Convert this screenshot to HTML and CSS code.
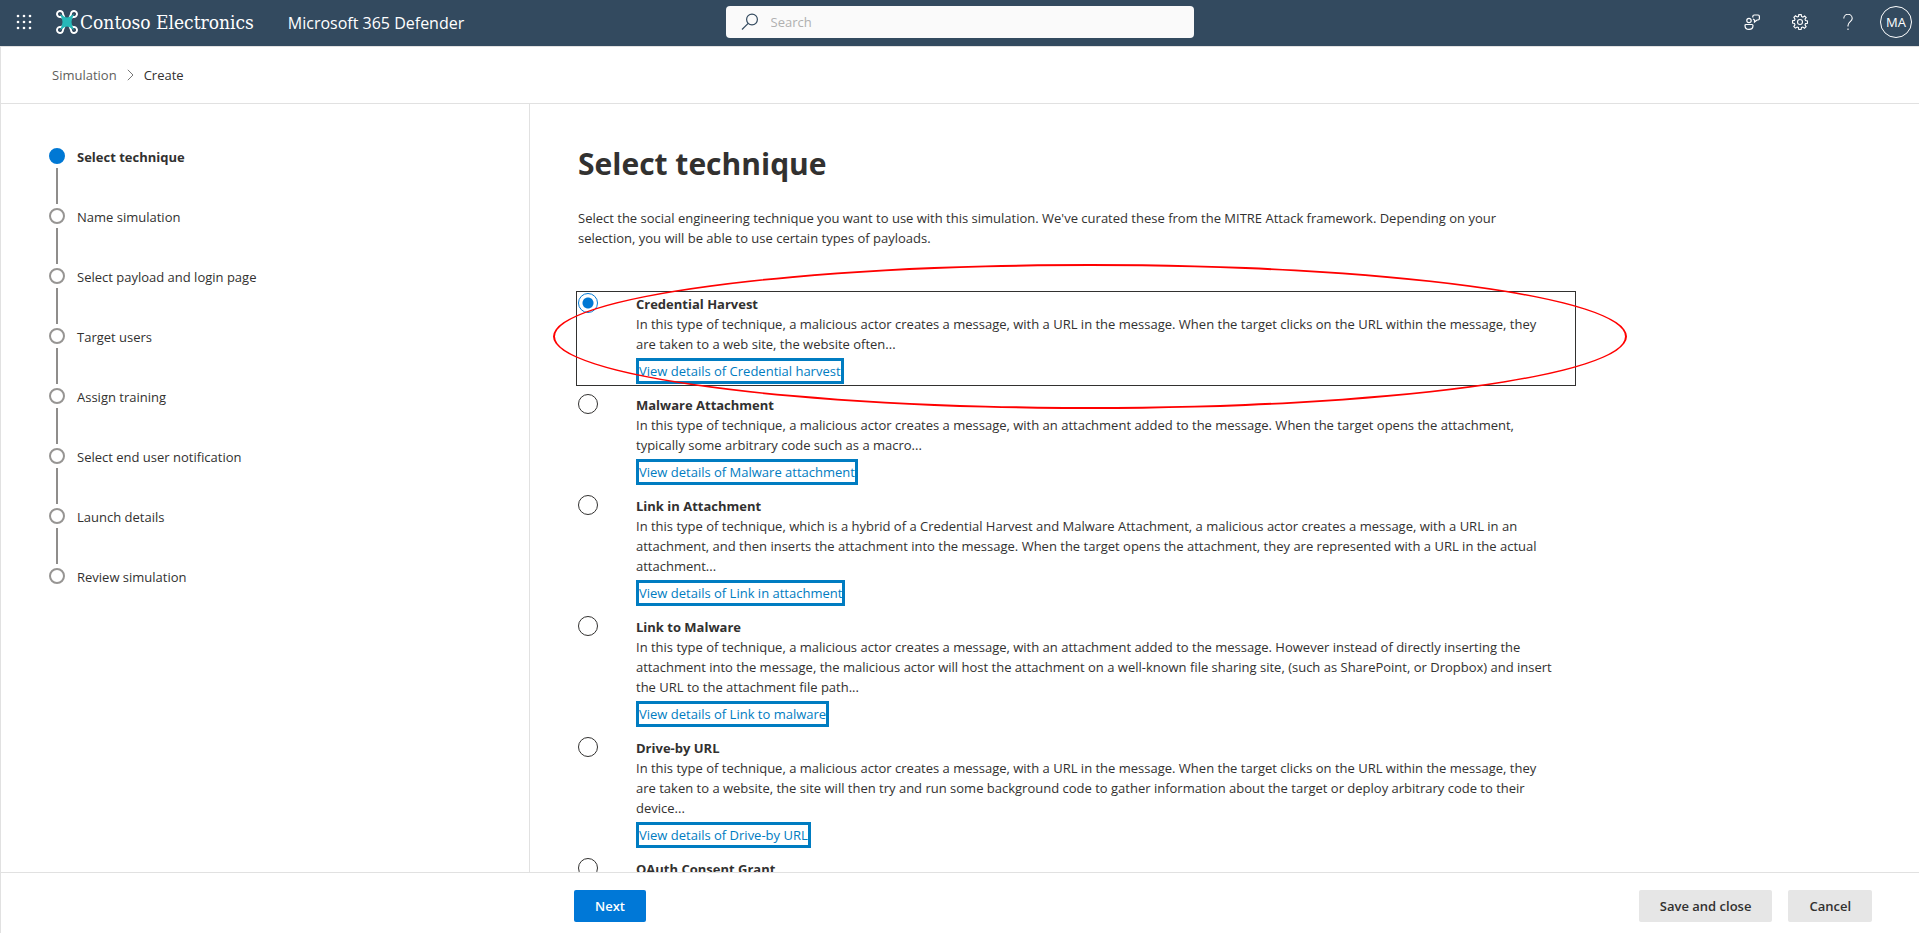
FILE: index.html
```html
<!DOCTYPE html>
<html lang="en">
<head>
    <meta charset="UTF-8">
    <title>Simulation - Microsoft 365 Defender</title>
    <link rel="stylesheet" href="styles.css">
</head>
<body>
    <header class="topbar">
        <div class="topbar-left">
            <button class="icon-btn waffle" aria-label="App launcher">
                <svg width="16" height="16" viewBox="0 0 16 16" fill="#fff">
                    <circle cx="2" cy="2" r="1.3"/><circle cx="8" cy="2" r="1.3"/><circle cx="14" cy="2" r="1.3"/>
                    <circle cx="2" cy="8" r="1.3"/><circle cx="8" cy="8" r="1.3"/><circle cx="14" cy="8" r="1.3"/>
                    <circle cx="2" cy="14" r="1.3"/><circle cx="8" cy="14" r="1.3"/><circle cx="14" cy="14" r="1.3"/>
                </svg>
            </button>
            <a class="brand" href="#">
                <svg width="22" height="24" viewBox="0 0 22 24" fill="none">
                    <g stroke="#fff" stroke-width="1.9">
                        <path d="M6.800 7.800L4.600 6.900A3 3 0 1 1 7 4L8.600 7.800"/>
                        <path d="M15.200 7.800L17.400 6.900A3 3 0 1 0 15 4L13.400 7.800"/>
                        <path d="M6.800 16.200L4.600 17.100A3 3 0 1 0 7 20L8.600 16.200"/>
                        <path d="M15.200 16.200L17.400 17.100A3 3 0 1 1 15 20L13.400 16.200"/>
                    </g>
                    <path d="M4 4L8.500 6.800Q11 8 13.500 6.800L18 4L16 9Q15 12 16 15L18 20L13.500 17.200Q11 16 8.500 17.200L4 20L6 15Q7 12 6 9Z" fill="#26b8b8"/>
                </svg>
                <span>Contoso Electronics</span>
            </a>
            <a class="product" href="#">Microsoft 365 Defender</a>
        </div>
        <label class="search">
            <svg width="18" height="18" viewBox="0 0 18 18" fill="none" stroke="#334a5f" stroke-width="1.2">
                <circle cx="11" cy="6.500" r="5.400"/><path d="M7.200 10.300L1 16.500"/>
            </svg>
            <input type="text" placeholder="Search" aria-label="Search">
        </label>
        <div class="topbar-right">
            <button class="icon-btn" aria-label="Community">
                <svg width="16" height="16" viewBox="0 0 16 16" fill="none" stroke="#fff" stroke-width="1.200">
                    <circle cx="5" cy="6.500" r="2.200"/>
                    <path d="M2 10.500H8A1 1 0 0 1 9 11.500C9 14 7.500 15.400 5 15.400S1 14 1 11.500A1 1 0 0 1 2 10.500Z"/>
                    <path d="M8.800 3.500V2.500A1.500 1.500 0 0 1 10.300 1H14A1.500 1.500 0 0 1 15.400 2.500V4.500A1.500 1.500 0 0 1 14 6H13L10.500 8V6L9 5"/>
                </svg>
            </button>
            <button class="icon-btn" aria-label="Settings">
                <svg width="16" height="16" viewBox="0 0 16 16" fill="none" stroke="#fff" stroke-width="1.100">
                    <path d="M6.800 .6H9.200L9.600 2.600L10.900 3.100L12.600 2L14.200 3.600L13 5.200L13.500 6.500L15.500 6.900V9.200L13.500 9.600L13 10.900L14.100 12.600L12.500 14.200L10.800 13L9.500 13.500L9.100 15.500H6.800L6.400 13.500L5.100 13L3.400 14.100L1.800 12.500L3 10.800L2.500 9.500L.5 9.100V6.800L2.500 6.400L3 5.100L1.900 3.400L3.500 1.800L5.200 3L6.500 2.500Z"/>
                    <circle cx="8" cy="8" r="2.500"/>
                </svg>
            </button>
            <button class="icon-btn" aria-label="Help">
                <svg width="16" height="16" viewBox="0 0 16 16" fill="none" stroke="#fff" stroke-width="1.100">
                    <path d="M3.800 4.500A4.200 4.200 0 0 1 12.200 4.500C12.200 7.500 8 8 8 11.500V12.500"/><path d="M8 14.500V16"/>
                </svg>
            </button>
            <button class="avatar">MA</button>
        </div>
    </header>

    <nav class="breadcrumb" aria-label="Breadcrumb">
        <a href="#">Simulation</a>
        <svg width="7" height="12" viewBox="0 0 7 12" fill="none" stroke="#777"><path d="M.8 .8L6 6L.8 11.200"/></svg>
        <span>Create</span>
    </nav>

    <div class="wizard">
        <aside class="steps">
            <ol>
                <li class="current">Select technique</li>
                <li>Name simulation</li>
                <li>Select payload and login page</li>
                <li>Target users</li>
                <li>Assign training</li>
                <li>Select end user notification</li>
                <li>Launch details</li>
                <li>Review simulation</li>
            </ol>
        </aside>

        <main class="content">
            <h1>Select technique</h1>
            <p class="intro">Select the social engineering technique you want to use with this simulation. We've curated these from the MITRE Attack framework. Depending on your selection, you will be able to use certain types of payloads.</p>

            <div class="option selected">
                <input type="radio" name="technique" id="t-credential" checked>
                <div class="option-text">
                    <label for="t-credential">Credential Harvest</label>
                    <p>In this type of technique, a malicious actor creates a message, with a URL in the message. When the target clicks on the URL within the message, they are taken to a web site, the website often...</p>
                    <a href="#">View details of Credential harvest</a>
                </div>
                <div class="highlight"></div>
            </div>
            <div class="option">
                <input type="radio" name="technique" id="t-malware">
                <div class="option-text">
                    <label for="t-malware">Malware Attachment</label>
                    <p>In this type of technique, a malicious actor creates a message, with an attachment added to the message. When the target opens the attachment, typically some arbitrary code such as a macro...</p>
                    <a href="#">View details of Malware attachment</a>
                </div>
            </div>
            <div class="option">
                <input type="radio" name="technique" id="t-link-in">
                <div class="option-text">
                    <label for="t-link-in">Link in Attachment</label>
                    <p>In this type of technique, which is a hybrid of a Credential Harvest and Malware Attachment, a malicious actor creates a message, with a URL in an attachment, and then inserts the attachment into the message. When the target opens the attachment, they are represented with a URL in the actual attachment...</p>
                    <a href="#">View details of Link in attachment</a>
                </div>
            </div>
            <div class="option">
                <input type="radio" name="technique" id="t-link-to">
                <div class="option-text">
                    <label for="t-link-to">Link to Malware</label>
                    <p>In this type of technique, a malicious actor creates a message, with an attachment added to the message. However instead of directly inserting the attachment into the message, the malicious actor will host the attachment on a well-known file sharing site, (such as SharePoint, or Dropbox) and insert the URL to the attachment file path...</p>
                    <a href="#">View details of Link to malware</a>
                </div>
            </div>
            <div class="option">
                <input type="radio" name="technique" id="t-driveby">
                <div class="option-text">
                    <label for="t-driveby">Drive-by URL</label>
                    <p>In this type of technique, a malicious actor creates a message, with a URL in the message. When the target clicks on the URL within the message, they are taken to a website, the site will then try and run some background code to gather information about the target or deploy arbitrary code to their device...</p>
                    <a href="#">View details of Drive-by URL</a>
                </div>
            </div>
            <div class="option">
                <input type="radio" name="technique" id="t-oauth">
                <div class="option-text">
                    <label for="t-oauth">OAuth Consent Grant</label>
                </div>
            </div>
        </main>
    </div>

    <footer class="actions">
        <button class="btn primary">Next</button>
        <div class="actions-right">
            <button class="btn">Save and close</button>
            <button class="btn">Cancel</button>
        </div>
    </footer>
</body>
</html>
```
FILE: styles.css
```css
*, *::before, *::after {
    box-sizing: border-box;
}
body, html {
    margin: 0;
    padding: 0;
    height: 100%;
    overflow: hidden;
}
body {
    display: flex;
    flex-direction: column;
    background-color: #fff;
    color: #323130;
    font-family: "Open Sans", "Noto Sans", sans-serif;
    font-size: 13px;
    line-height: 20px;
}
button, input {
    font-family: inherit;
    font-size: 13px;
}
a {
    color: inherit;
    text-decoration: none;
}

/* Top bar */
.topbar {
    display: grid;
    grid-template-columns: 1fr 468px 1fr;
    align-items: center;
    height: 46px;
    flex-shrink: 0;
    background-color: #334a5f;
    color: #fff;
}
.topbar-left, .topbar-right {
    display: flex;
    align-items: center;
    padding-bottom: 2px;
}
.topbar-right {
    justify-content: flex-end;
    padding-right: 7px;
}
.icon-btn {
    display: flex;
    align-items: center;
    justify-content: center;
    width: 48px;
    height: 44px;
    padding: 0;
    border: none;
    background: none;
    cursor: pointer;
}
.brand {
    display: flex;
    align-items: center;
    gap: 2px;
    margin-left: 8px;
    font-family: "DejaVu Serif Condensed", "DejaVu Serif", serif;
    font-size: 19px;
}
.product {
    margin-left: 34px;
    padding-top: 2px;
    font-size: 16px;
}
.search {
    display: flex;
    align-items: center;
    gap: 12px;
    height: 32px;
    margin-bottom: 2px;
    padding: 0 15px;
    border-radius: 4px;
    background-color: #fafafa;
}
.search input {
    flex-grow: 1;
    padding: 0;
    border: none;
    outline: none;
    background: none;
}
.search input::placeholder {
    color: #b0b0b0;
}
.avatar {
    width: 32px;
    height: 32px;
    margin-left: 8px;
    padding: 0;
    border: 1px solid #fff;
    border-radius: 50%;
    background: none;
    color: #fff;
}

/* Breadcrumb */
.breadcrumb {
    display: flex;
    align-items: center;
    gap: 10px;
    height: 58px;
    flex-shrink: 0;
    padding-left: 51px;
    border: 1px solid #e1e1e1;
    border-width: 1px 0 1px 1px;
}
.breadcrumb a {
    color: #605e5c;
}

/* Wizard */
.wizard {
    display: flex;
    flex-grow: 1;
    min-height: 0;
    border-left: 1px solid #e1e1e1;
}
.steps {
    width: 529px;
    flex-shrink: 0;
    padding: 43px 48px;
    border-right: 1px solid #e1e1e1;
}
.steps ol {
    margin: 0;
    padding: 0;
    list-style: none;
}
.steps li {
    position: relative;
    height: 60px;
    padding-left: 28px;
}
.steps li::before { /* step dot */
    content: "";
    position: absolute;
    top: 1px;
    left: 0;
    width: 16px;
    height: 16px;
    border: 2px solid #979593;
    border-radius: 50%;
}
.steps li::after { /* connector to the next step */
    content: "";
    position: absolute;
    top: 21px;
    left: 7px;
    width: 2px;
    height: 36px;
    background-color: #8f8d8b;
}
.steps li:last-child::after {
    display: none;
}
.steps .current {
    font-weight: bold;
}
.steps .current::before {
    border-color: #0078d4;
    background-color: #0078d4;
}
.content {
    flex-grow: 1;
    overflow: hidden;
    padding: 40px 46px 0;
}
.content h1 {
    margin: 0 0 24px 2px;
    font-size: 30px;
    line-height: 40px;
}
.intro {
    max-width: 960px;
    margin: 0 0 43px 2px;
}

/* Technique options */
.option {
    position: relative;
    display: flex;
    max-width: 1000px;
    margin-bottom: 6px;
    padding: 1px;
    border: 1px solid transparent;
}
.option.selected {
    border-color: #323130;
}
.option input {
    appearance: none;
    width: 20px;
    height: 20px;
    margin: 0 38px 0 0;
    flex-shrink: 0;
    border: 1px solid #323130;
    border-radius: 50%;
}
.option input:checked {
    border-color: #0078d4;
    background: radial-gradient(circle, #0078d4 5px, transparent 6px);
}
.option-text {
    display: flex;
    flex-direction: column;
    align-items: flex-start;
    max-width: 922px;
    padding-top: 1px;
}
.option-text label {
    font-weight: bold;
}
.option-text p {
    margin: 0 0 4px;
}
.option-text a {
    border: 3px solid #007cc1;
    color: #007cc1;
}
.highlight {
    position: absolute;
    top: -28px;
    bottom: -24px;
    left: -24px;
    right: -52px;
    border: 2px solid #f00;
    border-radius: 50%;
    pointer-events: none;
}

/* Footer */
.actions {
    display: flex;
    justify-content: space-between;
    flex-shrink: 0;
    height: 61px;
    padding: 17px 47px 0 573px;
    border: 1px solid #e1e1e1;
    border-width: 1px 0 0 1px;
}
.actions-right {
    display: flex;
    gap: 16px;
}
.btn {
    height: 32px;
    padding: 0 21px;
    border: none;
    border-radius: 2px;
    background-color: #e6e6e6;
    color: #323130;
    font-weight: 600;
    cursor: pointer;
}
.btn.primary {
    background-color: #0078d7;
    color: #fff;
}
```
